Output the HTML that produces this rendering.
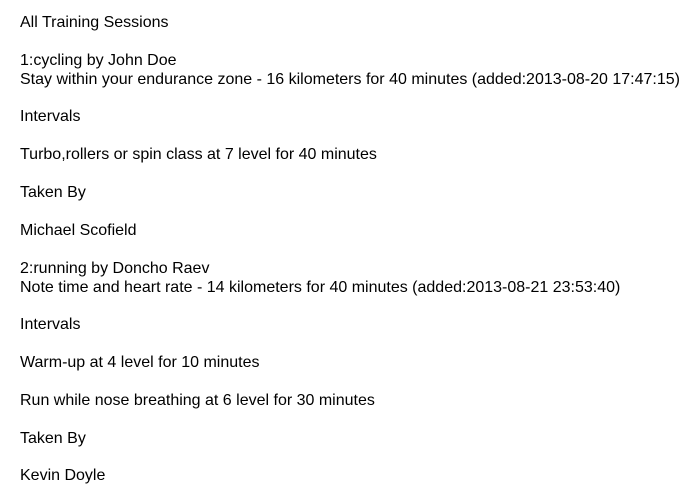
<!DOCTYPE html>
<html><head><style>
body{margin:0;background:#fff;font-family:"Liberation Sans",Arial,sans-serif;font-size:16px;color:#000;}
div{position:absolute;left:20px;line-height:19px;white-space:nowrap;}
</style></head><body>
<div style="top:13px">All Training Sessions</div>
<div style="top:51px">1:cycling by John Doe</div>
<div style="top:70px">Stay within your endurance zone - 16 kilometers for 40 minutes (added:2013-08-20 17:47:15)</div>
<div style="top:107px">Intervals</div>
<div style="top:145px">Turbo,rollers or spin class at 7 level for 40 minutes</div>
<div style="top:183px">Taken By</div>
<div style="top:221px">Michael Scofield</div>
<div style="top:259px">2:running by Doncho Raev</div>
<div style="top:278px">Note time and heart rate - 14 kilometers for 40 minutes (added:2013-08-21 23:53:40)</div>
<div style="top:315px">Intervals</div>
<div style="top:353px">Warm-up at 4 level for 10 minutes</div>
<div style="top:391px">Run while nose breathing at 6 level for 30 minutes</div>
<div style="top:429px">Taken By</div>
<div style="top:466px">Kevin Doyle</div>
</body></html>
